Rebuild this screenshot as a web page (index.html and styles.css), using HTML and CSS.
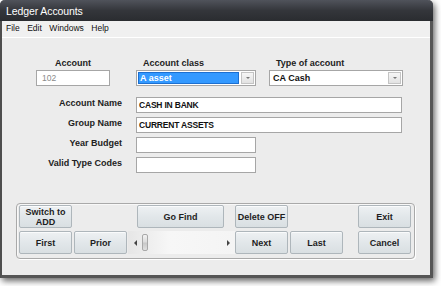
FILE: index.html
```html
<!DOCTYPE html>
<html>
<head>
<meta charset="utf-8">
<link rel="stylesheet" href="styles.css">
</head>
<body>
<div class="window">
  <div class="titlebar">Ledger Accounts</div>
  <div class="menubar">
    <span class="menu">File</span>
    <span class="menu">Edit</span>
    <span class="menu">Windows</span>
    <span class="menu">Help</span>
  </div>
  <div class="content">
    <div class="toprow">
      <div class="col col-account">
        <div class="toplabel center">Account</div>
        <div class="field disabled">102</div>
      </div>
      <div class="col col-class">
        <div class="toplabel indent">Account class</div>
        <div class="combo">
          <div class="combo-text selected">A asset</div>
          <div class="combo-btn"><span class="arrow"></span></div>
        </div>
      </div>
      <div class="col col-type">
        <div class="toplabel indent">Type of account</div>
        <div class="combo">
          <div class="combo-text">CA Cash</div>
          <div class="combo-btn"><span class="arrow"></span></div>
        </div>
      </div>
    </div>
    <div class="form">
      <div class="label">Account Name</div>
      <div class="field wide">CASH IN BANK</div>
      <div class="label">Group Name</div>
      <div class="field wide">CURRENT ASSETS</div>
      <div class="label">Year Budget</div>
      <div class="field short"></div>
      <div class="label">Valid Type Codes</div>
      <div class="field short"></div>
    </div>
    <div class="panel">
      <button class="btn b-switch">Switch to<br>ADD</button>
      <button class="btn b-find">Go Find</button>
      <button class="btn b-delete">Delete OFF</button>
      <button class="btn b-exit">Exit</button>
      <button class="btn b-first">First</button>
      <button class="btn b-prior">Prior</button>
      <div class="slider">
        <span class="sarrow left"></span>
        <span class="thumb"></span>
        <span class="track"></span>
        <span class="sarrow right"></span>
      </div>
      <button class="btn b-next">Next</button>
      <button class="btn b-last">Last</button>
      <button class="btn b-cancel">Cancel</button>
    </div>
  </div>
</div>
</body>
</html>
```
FILE: styles.css
```css
html, body {
  margin: 0;
  padding: 0;
  background: #ffffff;
}
body {
  font-family: "Liberation Sans", Arial, sans-serif;
  width: 441px;
  height: 286px;
  overflow: hidden;
}
.window {
  width: 433px;
  height: 278px;
  box-sizing: border-box;
  border-left: 2px solid #4e4e4e;
  border-right: 3px solid #555555;
  border-bottom: 3px solid #555555;
  border-radius: 5px 5px 0 0;
  background: #ececec;
  box-shadow: 2px 3px 6px rgba(0,0,0,0.6);
  display: flex;
  flex-direction: column;
}
.titlebar {
  height: 21px;
  margin-left: -2px;
  margin-right: -3px;
  padding-left: 6px;
  box-sizing: border-box;
  background: linear-gradient(#50535b, #34363b 50%, #2a2c30);
  border-radius: 5px 5px 0 0;
  color: #ffffff;
  font-size: 10.5px;
  line-height: 22px;
  letter-spacing: -0.1px;
}
.menubar {
  height: 16px;
  background: #f0f0f0;
  border-bottom: 1px solid #ffffff;
  display: flex;
  font-size: 8.5px;
  line-height: 15px;
  color: #111;
  padding-left: 4px;
  gap: 7.5px;
}
.menu {
  padding: 0;
}
.content {
  flex: 1;
  background: #ececec;
  padding-top: 19px;
}
.toprow {
  display: flex;
  margin-left: 34px;
}
.col { display: flex; flex-direction: column; }
.col-account { width: 74px; margin-right: 26px; }
.col-class { width: 120px; margin-right: 13px; }
.col-type { width: 134px; }
.toplabel {
  font-size: 9px;
  font-weight: bold;
  color: #222;
  height: 12px;
  line-height: 12px;
  margin-bottom: 1px;
}
.toplabel.center { text-align: center; }
.toplabel.indent { padding-left: 7px; }
.field {
  height: 16px;
  box-sizing: border-box;
  border: 1px solid #a6a6a6;
  background: #ffffff;
  font-size: 8.5px;
  font-weight: bold;
  color: #111;
  line-height: 14px;
  padding-left: 2px;
  white-space: nowrap;
  letter-spacing: -0.2px;
}
.field.disabled {
  font-weight: normal;
  color: #8a8a8a;
  padding-left: 5px;
  letter-spacing: 0;
}
.combo {
  height: 16px;
  box-sizing: border-box;
  border: 1px solid #a6a6a6;
  background: #ffffff;
  display: flex;
  padding: 1px;
  gap: 2px;
}
.combo-text {
  flex: 1;
  font-size: 9px;
  font-weight: bold;
  color: #111;
  line-height: 12px;
  padding-left: 2px;
}
.combo-text.selected {
  background: #3399ff;
  color: #ffffff;
  border: 1px solid #1c6fd0;
  line-height: 10px;
  padding-left: 1px;
}
.combo-btn {
  width: 11px;
  border: 1px solid #c4c4c4;
  background: linear-gradient(#f6f6f6, #e2e2e2);
  display: flex;
  align-items: center;
  justify-content: center;
}
.arrow {
  width: 0; height: 0;
  border-left: 2px solid transparent;
  border-right: 2px solid transparent;
  border-top: 2px solid #777;
}
.form {
  display: grid;
  grid-template-columns: 86px 266px;
  column-gap: 14px;
  row-gap: 4px;
  margin-left: 34px;
  margin-top: 11px;
}
.label {
  text-align: right;
  font-size: 9px;
  font-weight: bold;
  color: #222;
  line-height: 12px;
  height: 16px;
}
.field.short { width: 120px; }
.panel {
  margin: 30px 0 0 14px;
  width: 399px;
  height: 56px;
  box-sizing: border-box;
  border: 1px solid #a9a9a9;
  border-radius: 4px;
  padding: 1px 2px 2px 2px;
  display: grid;
  grid-template-columns: 53px 2px 53px 10px 87px 11px 53px 2px 53px 15px 53px;
  grid-template-rows: 23px 23px;
  row-gap: 3px;
  box-shadow: inset 1px 1px 0 #f8f8f8, 1px 1px 0 #ffffff;
}
.btn {
  margin: 0;
  padding: 0;
  border: 1px solid #aeb6bb;
  border-radius: 2px;
  background: linear-gradient(#eef1f3, #e2e7ea 50%, #d9dfe2);
  box-shadow: inset 0 1px 0 #fafbfc;
  font-family: "Liberation Sans", Arial, sans-serif;
  font-size: 9px;
  font-weight: bold;
  color: #1e1e1e;
  line-height: 10px;
}
.b-switch { grid-column: 1; grid-row: 1; }
.b-find { grid-column: 5; grid-row: 1; }
.b-delete { grid-column: 7; grid-row: 1; }
.b-exit { grid-column: 11; grid-row: 1; }
.b-first { grid-column: 1; grid-row: 2; }
.b-prior { grid-column: 3; grid-row: 2; }
.b-next { grid-column: 7; grid-row: 2; }
.b-last { grid-column: 9; grid-row: 2; }
.b-cancel { grid-column: 11; grid-row: 2; }
.slider {
  grid-column: 4 / 7;
  grid-row: 2;
  margin-left: 1px;
  display: flex;
  align-items: center;
  background: linear-gradient(90deg, #e6e6e6, #f7f7f7 40%, #f4f4f4);
  padding: 0 5px 0 6px;
}
.sarrow {
  width: 0; height: 0;
  border-top: 3px solid transparent;
  border-bottom: 3px solid transparent;
}
.sarrow.left { border-right: 3px solid #444; }
.sarrow.right { border-left: 3px solid #444; }
.thumb {
  width: 6px;
  height: 17px;
  margin-left: 5px;
  box-sizing: border-box;
  border: 1px solid #a8a8a8;
  border-radius: 2px;
  background: linear-gradient(#f2f2f2, #dcdcdc 45%, #c8c8c8 55%, #e0e0e0);
}
.track { flex: 1; }
```
